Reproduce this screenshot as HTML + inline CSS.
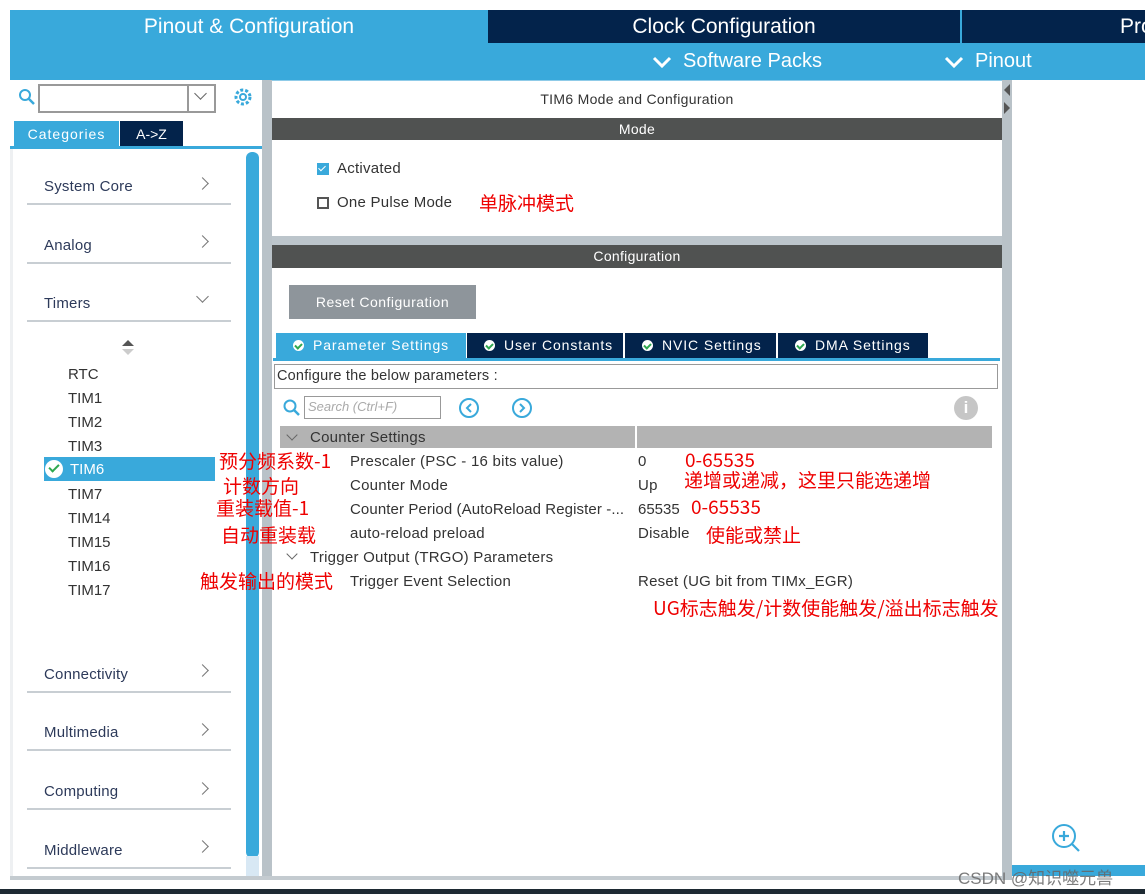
<!DOCTYPE html>
<html><head><meta charset="utf-8"><style>
*{margin:0;padding:0;box-sizing:border-box}
body{width:1145px;height:894px;position:relative;overflow:hidden;background:#fff;font-family:"Liberation Sans","Noto Sans CJK SC",sans-serif;color:#333}
.a{position:absolute}
.cn{position:absolute;z-index:5;color:#e00;font-family:"WenQuanYi Zen Hei","Noto Sans CJK SC",sans-serif;font-size:19px;white-space:nowrap;line-height:22px}
.t{position:absolute;font-size:15px;letter-spacing:.25px;color:#333;white-space:nowrap}
.cat{position:absolute;left:44px;font-size:15px;letter-spacing:.2px;color:#2d3a5a}
.line{position:absolute;left:27px;width:204px;height:2px;background:#c8ced3}
.chev{position:absolute;left:198px;width:9px;height:9px;border-right:1.5px solid #777;border-top:1.5px solid #777;transform:rotate(45deg)}
.tim{position:absolute;left:68px;font-size:15px;color:#333}
.tab{position:absolute;top:333px;height:25px;background:#03234b;color:#fff;font-size:14px;line-height:25px;letter-spacing:.9px}
.ck{display:inline-block;width:11px;height:11px;border-radius:50%;background:#fff;vertical-align:-1px;margin:0 9px 0 17px;position:relative}
.ck:after{content:"";position:absolute;left:3px;top:2px;width:3px;height:5px;border-right:2px solid #2fa84f;border-bottom:2px solid #2fa84f;transform:rotate(45deg)}
.hd{position:absolute;color:#fff;font-size:21px}
</style></head><body>
<div class="a" style="left:10px;top:10px;width:1135px;height:70px;background:#39a9db"></div>
<div class="hd" style="left:10px;top:10px;width:478px;height:33px;text-align:center;line-height:33px">Pinout &amp; Configuration</div>
<div class="a" style="left:488px;top:10px;width:472px;height:33px;background:#03234b"></div>
<div class="hd" style="left:488px;top:10px;width:472px;height:33px;text-align:center;line-height:33px">Clock Configuration</div>
<div class="a" style="left:962px;top:10px;width:183px;height:33px;background:#03234b"></div>
<div class="hd" style="left:1120px;top:10px;line-height:33px">Pro</div>
<svg class="a" style="left:652px;top:55px" width="20" height="14"><path d="M2 3l8 8 8-8" fill="none" stroke="#fff" stroke-width="3"/></svg>
<div class="a" style="left:683px;top:50px;color:#fff;font-size:20px">Software Packs</div>
<svg class="a" style="left:944px;top:55px" width="20" height="14"><path d="M2 3l8 8 8-8" fill="none" stroke="#fff" stroke-width="3"/></svg>
<div class="a" style="left:975px;top:50px;color:#fff;font-size:20px">Pinout</div>
<svg class="a" style="left:18px;top:88px" width="18" height="18"><circle cx="7" cy="7" r="5" fill="none" stroke="#39a9db" stroke-width="2"/><path d="M11 11l5 5" stroke="#39a9db" stroke-width="2.5"/></svg>
<div class="a" style="left:38px;top:84px;width:178px;height:29px;border:2px solid #999;background:#fff"></div>
<div class="a" style="left:187px;top:84px;width:29px;height:29px;border:2px solid #999"></div>
<div class="a" style="left:196px;top:89px;width:9px;height:9px;border-right:1.5px solid #666;border-bottom:1.5px solid #666;transform:rotate(45deg)"></div>
<svg class="a" style="left:233px;top:87px" width="20" height="20"><circle cx="10" cy="10" r="7" fill="none" stroke="#39a9db" stroke-width="3" stroke-dasharray="3 2"/><circle cx="10" cy="10" r="3" fill="none" stroke="#39a9db" stroke-width="2"/></svg>
<div class="a" style="left:14px;top:121px;width:105px;height:26px;background:#39a9db;color:#fff;font-size:14px;line-height:26px;text-align:center;letter-spacing:1px">Categories</div>
<div class="a" style="left:120px;top:121px;width:63px;height:26px;background:#03234b;color:#fff;font-size:14px;line-height:26px;text-align:center">A-&gt;Z</div>
<div class="a" style="left:10px;top:146px;width:252px;height:3px;background:#39a9db"></div>
<div class="a" style="left:10px;top:149px;width:3px;height:730px;background:#eef0f2"></div>
<div class="a" style="left:246px;top:152px;width:13px;height:706px;background:#39a9db;border-radius:6px"></div>
<div class="a" style="left:246px;top:856px;width:13px;height:22px;background:#d8e8f4"></div>
<div class="a" style="left:262px;top:80px;width:10px;height:800px;background:#b9c2c8"></div>
<div class="a" style="left:10px;top:876px;width:1000px;height:4px;background:#c4cbd0"></div>
<div class="a" style="left:0;top:889px;width:1145px;height:5px;background:#1e2a33"></div>

<div class="cat" style="top:178px">System Core</div><div class="chev" style="top:179px"></div><div class="line" style="top:203px"></div>
<div class="cat" style="top:237px">Analog</div><div class="chev" style="top:237px"></div><div class="line" style="top:262px"></div>
<div class="cat" style="top:295px">Timers</div><div class="chev" style="top:292px;transform:rotate(135deg)"></div><div class="line" style="top:320px"></div>
<div class="a" style="left:122px;top:340px;width:0;height:0;border:6px solid transparent;border-bottom:6px solid #555;border-top:0"></div>
<div class="a" style="left:122px;top:349px;width:0;height:0;border:6px solid transparent;border-top:6px solid #ccc;border-bottom:0"></div>
<div class="tim" style="top:366px">RTC</div>
<div class="tim" style="top:390px">TIM1</div>
<div class="tim" style="top:414px">TIM2</div>
<div class="tim" style="top:438px">TIM3</div>
<div class="a" style="left:44px;top:457px;width:171px;height:24px;background:#39a9db"></div>
<div class="a" style="left:45px;top:460px;width:18px;height:18px;border-radius:50%;background:#fff"></div>
<div class="a" style="left:51px;top:462px;width:6px;height:10px;border-right:2.5px solid #2fa84f;border-bottom:2.5px solid #2fa84f;transform:rotate(45deg)"></div>
<div class="tim" style="top:461px;left:70px;color:#fff">TIM6</div>
<div class="tim" style="top:486px">TIM7</div>
<div class="tim" style="top:510px">TIM14</div>
<div class="tim" style="top:534px">TIM15</div>
<div class="tim" style="top:558px">TIM16</div>
<div class="tim" style="top:582px">TIM17</div>
<div class="cat" style="top:666px">Connectivity</div><div class="chev" style="top:666px"></div><div class="line" style="top:691px"></div>
<div class="cat" style="top:724px">Multimedia</div><div class="chev" style="top:725px"></div><div class="line" style="top:749px"></div>
<div class="cat" style="top:783px">Computing</div><div class="chev" style="top:784px"></div><div class="line" style="top:808px"></div>
<div class="cat" style="top:842px">Middleware</div><div class="chev" style="top:842px"></div><div class="line" style="top:867px"></div>

<div class="a" style="left:272px;top:80px;width:730px;height:1px;background:#8fcbe8"></div>
<div class="t" style="left:272px;width:730px;text-align:center;top:91px;font-size:14px;letter-spacing:.3px">TIM6 Mode and Configuration</div>
<div class="a" style="left:272px;top:118px;width:730px;height:22px;background:#505251;color:#fff;font-size:14px;line-height:22px;text-align:center;letter-spacing:.3px">Mode</div>
<div class="a" style="left:317px;top:163px;width:12px;height:12px;background:#39a9db"></div>
<div class="a" style="left:320px;top:164px;width:4px;height:7px;border-right:1.5px solid #fff;border-bottom:1.5px solid #fff;transform:rotate(45deg)"></div>
<div class="t" style="left:337px;top:160px">Activated</div>
<div class="a" style="left:317px;top:197px;width:12px;height:12px;border:2px solid #555"></div>
<div class="t" style="left:337px;top:194px">One Pulse Mode</div>
<div class="cn" style="left:479px;top:192px">单脉冲模式</div>
<div class="a" style="left:272px;top:236px;width:730px;height:9px;background:#bcc5cb"></div>
<div class="a" style="left:272px;top:245px;width:730px;height:23px;background:#505251;color:#fff;font-size:14px;line-height:23px;text-align:center;letter-spacing:.3px">Configuration</div>
<div class="a" style="left:289px;top:285px;width:187px;height:34px;background:#8e959b;color:#fff;font-size:14px;line-height:34px;text-align:center;letter-spacing:.5px">Reset Configuration</div>
<div class="tab" style="left:276px;width:190px;background:#39a9db"><span class="ck"></span>Parameter Settings</div>
<div class="tab" style="left:467px;width:156px"><span class="ck"></span>User Constants</div>
<div class="tab" style="left:625px;width:151px"><span class="ck"></span>NVIC Settings</div>
<div class="tab" style="left:778px;width:150px"><span class="ck"></span>DMA Settings</div>
<div class="a" style="left:273px;top:358px;width:727px;height:3px;background:#39a9db"></div>
<div class="a" style="left:274px;top:364px;width:724px;height:25px;border:1.5px solid #999;font-size:14.5px;line-height:22px;padding-left:2px;letter-spacing:.2px">Configure the below parameters :</div>
<svg class="a" style="left:283px;top:399px" width="18" height="18"><circle cx="7" cy="7" r="5.5" fill="none" stroke="#39a9db" stroke-width="2"/><path d="M11 11l5 5" stroke="#39a9db" stroke-width="2.5"/></svg>
<div class="a" style="left:304px;top:396px;width:137px;height:23px;border:1.5px solid #999;color:#aaa;font-style:italic;font-size:13px;line-height:20px;padding-left:3px">Search (Ctrl+F)</div>
<svg class="a" style="left:458px;top:397px" width="22" height="22"><circle cx="11" cy="11" r="9" fill="none" stroke="#39a9db" stroke-width="2"/><path d="M13 7l-4 4 4 4" fill="none" stroke="#39a9db" stroke-width="2"/></svg>
<svg class="a" style="left:511px;top:397px" width="22" height="22"><circle cx="11" cy="11" r="9" fill="none" stroke="#39a9db" stroke-width="2"/><path d="M9 7l4 4-4 4" fill="none" stroke="#39a9db" stroke-width="2"/></svg>
<div class="a" style="left:954px;top:396px;width:24px;height:24px;border-radius:50%;background:#c6c6c6;color:#fff;font-weight:bold;font-size:17px;text-align:center;line-height:24px">i</div>
<div class="a" style="left:280px;top:426px;width:355px;height:22px;background:#b3b3b3"></div>
<div class="a" style="left:637px;top:426px;width:355px;height:22px;background:#b3b3b3"></div>
<div class="a" style="left:288px;top:431px;width:8px;height:8px;border-right:1.2px solid #666;border-bottom:1.2px solid #666;transform:rotate(45deg)"></div>
<div class="t" style="left:310px;top:429px">Counter Settings</div>
<div class="t" style="left:350px;top:453px">Prescaler (PSC - 16 bits value)</div><div class="t" style="left:638px;top:453px">0</div>
<div class="t" style="left:350px;top:477px">Counter Mode</div><div class="t" style="left:638px;top:477px">Up</div>
<div class="t" style="left:350px;top:501px;letter-spacing:.1px">Counter Period (AutoReload Register -...</div><div class="t" style="left:638px;top:501px;letter-spacing:0;background:#fff">65535</div>
<div class="t" style="left:350px;top:525px">auto-reload preload</div><div class="t" style="left:638px;top:525px">Disable</div>
<div class="a" style="left:288px;top:550px;width:8px;height:8px;border-right:1.2px solid #666;border-bottom:1.2px solid #666;transform:rotate(45deg)"></div>
<div class="t" style="left:310px;top:549px">Trigger Output (TRGO) Parameters</div>
<div class="t" style="left:350px;top:573px">Trigger Event Selection</div><div class="t" style="left:638px;top:573px">Reset (UG bit from TIMx_EGR)</div>
<div class="cn" style="left:219px;top:450px">预分频系数-1</div>
<div class="cn" style="left:223px;top:475px">计数方向</div>
<div class="cn" style="left:216px;top:497px">重装载值-1</div>
<div class="cn" style="left:221px;top:524px">自动重装载</div>
<div class="cn" style="left:200px;top:570px">触发输出的模式</div>
<div class="cn" style="left:685px;top:449px">0-65535</div>
<div class="cn" style="left:684px;top:469px">递增或递减，这里只能选递增</div>
<div class="cn" style="left:691px;top:496px">0-65535</div>
<div class="cn" style="left:706px;top:524px">使能或禁止</div>
<div class="cn" style="left:653px;top:597px">UG标志触发/计数使能触发/溢出标志触发</div>

<div class="a" style="left:1002px;top:80px;width:10px;height:800px;background:#b9c2c8"></div>
<div class="a" style="left:1004px;top:84px;width:0;height:0;border:6px solid transparent;border-right:6px solid #555;border-left:0"></div>
<div class="a" style="left:1004px;top:102px;width:0;height:0;border:6px solid transparent;border-left:6px solid #555;border-right:0"></div>
<svg class="a" style="left:1048px;top:820px" width="36" height="36"><circle cx="16" cy="16" r="11" fill="none" stroke="#39a9db" stroke-width="2"/><path d="M16 11v10M11 16h10M24 24l7 7" stroke="#39a9db" stroke-width="2.2"/></svg>
<div class="a" style="left:1012px;top:865px;width:133px;height:11px;background:#39a9db"></div>
<div class="a" style="left:958px;top:864px;font-size:17px;color:#666;opacity:.85;white-space:nowrap;z-index:6">CSDN @知识噬元兽</div>
</body></html>
